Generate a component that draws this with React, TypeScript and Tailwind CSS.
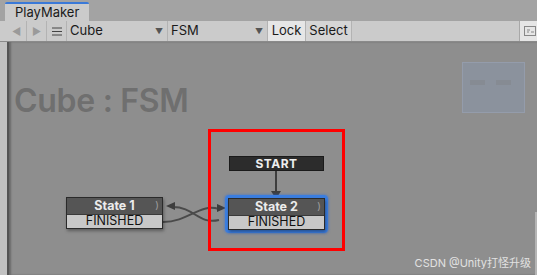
import React from "react";

const font = { fontFamily: "Inter, 'Noto Sans CJK SC', sans-serif" };

function Node({ title, x, y, w, selected }: { title: string; x: number; y: number; w: number; selected?: boolean }) {
  return (
    <div
      className={`absolute ${selected ? "rounded-[4px] border-[3px] border-[#3b7ee0] shadow-[0_0_3px_rgba(40,110,230,0.8)]" : ""}`}
      style={{ left: x, top: y }}
    >
      <div className="border border-[#2a2a2a] shadow-[1px_2px_3px_rgba(0,0,0,0.35)]" style={{ width: w }}>
        <div className="relative h-[16px] bg-[#555555] flex items-center justify-center text-[12.5px] font-bold text-[#ececec] leading-none">
          {title}
          <span className="absolute right-[3px] top-[2px] text-[10px] text-[#a0a0a0] font-normal">)</span>
        </div>
        <div className="h-[14px] bg-[#c8c8c8] border-t border-[#3a3a3a] flex items-center justify-center text-[12.5px] text-[#111] leading-none">
          FINISHED
        </div>
      </div>
    </div>
  );
}

export default function App() {
  return (
    <div className="w-[537px] h-[275px] bg-[#a3a3a3] flex flex-col overflow-hidden" style={font}>
      {/* Tab strip */}
      <div className="h-[21px] flex items-end pl-[5px]">
        <div className="w-[84px] h-[19px] bg-[#cbcbcb] border-t-2 border-[#3a79d8] rounded-t-[2px] text-[13px] text-[#1a1a1a] pl-[10px] leading-[17px]">
          PlayMaker
        </div>
      </div>

      {/* Toolbar */}
      <div className="h-[21px] bg-[#cbcbcb] border-b border-[#8a8a8a] flex items-stretch pl-[7px] text-[13px] text-[#1a1a1a]">
        <div className="w-[20px] flex items-center justify-center border-r border-[#b3b3b3] text-[#9a9a9a] text-[10px]">◀</div>
        <div className="w-[20px] flex items-center justify-center border-r border-[#b3b3b3] text-[#9a9a9a] text-[10px]">▶</div>
        <div className="w-[20px] flex items-center justify-center border-r border-[#b3b3b3] text-[#333]">
          <svg width="10" height="9" viewBox="0 0 10 9"><path d="M0 1h10M0 4.5h10M0 8h10" stroke="#444" strokeWidth="1" /></svg>
        </div>
        <div className="w-[101px] flex items-center justify-between pl-[3px] pr-[4px] border-r border-[#b3b3b3]">
          <span>Cube</span>
          <span className="text-[8px] text-[#555]">▼</span>
        </div>
        <div className="w-[100px] flex items-center justify-between pl-[3px] pr-[4px] border-r border-[#b3b3b3]">
          <span>FSM</span>
          <span className="text-[8px] text-[#555]">▼</span>
        </div>
        <div className="w-[38px] bg-[#e6e6e6] flex items-center justify-center border-r border-[#b3b3b3]">Lock</div>
        <div className="w-[46px] bg-[#d5d5d5] flex items-center justify-center border-r border-[#b3b3b3]">Select</div>
        <div className="flex-1 border-r border-[#a8a8a8]" />
        <div className="w-[17px] bg-[#e6e6e6] flex items-center pl-[4px]">
          <svg width="12" height="10" viewBox="0 0 12 10">
            <rect x="0.5" y="0.5" width="11" height="9" fill="none" stroke="#888" />
            <path d="M3 4h3M3 6h2M7 6h3" stroke="#888" />
          </svg>
        </div>
      </div>

      {/* Body */}
      <div className="flex-1 flex">
        <div className="w-[7px] bg-[#c2c2c2]" />
        <div className="relative flex-1 bg-[#8e8e8e] border-l-2 border-[#555] shadow-[inset_2px_0_2px_rgba(0,0,0,0.25)]">
          <div className="absolute left-[5px] top-[35px] text-[32px] font-semibold text-[#6f6f6f] tracking-[-0.3px]">Cube : FSM</div>

          {/* minimap */}
          <div className="absolute left-[453px] top-[20px] w-[63px] h-[51px] bg-[#8b929d] border border-[#949cab]">
            <div className="absolute left-[7px] top-[17px] w-[15px] h-[5px] bg-[#868b93]" />
            <div className="absolute left-[33px] top-[17px] w-[15px] h-[5px] bg-[#868b93]" />
          </div>

          {/* connections */}
          <svg className="absolute left-0 top-0" width="530" height="233">
            <path d="M267 128 L267 152" stroke="#3d3d3d" strokeWidth="2" fill="none" />
            <path d="M262 149 L272 149 L267 157 Z" fill="#3d3d3d" />
            <path d="M164 165 C185 165, 190 183, 210 178" stroke="#4a4a4a" strokeWidth="2" fill="none" />
            <path d="M154 180 C180 180, 190 161, 210 167" stroke="#4a4a4a" strokeWidth="2" fill="none" />
            <path d="M157 164 L166 160 L166 168 Z" fill="#3d3d3d" />
            <path d="M217 166 L208 162 L208 170 Z" fill="#3d3d3d" />
          </svg>

          {/* START */}
          <div className="absolute left-[220px] top-[114px] w-[95px] h-[15px] bg-[#2c2c2c] border border-[#1a1a1a] flex items-center justify-center text-[12px] font-bold text-[#eeeeee] tracking-[0.5px] leading-none">
            START
          </div>

          <Node title="State 1" x={57} y={155} w={97} />
          <Node title="State 2" x={216} y={153} w={97} selected />

          {/* highlight frame */}
          <div className="absolute left-[199px] top-[87px] w-[137px] h-[122px] border-[3px] border-[#ff0000]" />

          <div className="absolute right-[6px] bottom-[6px] text-[11px] text-[#e2e2e2] leading-none">CSDN @Unity打怪升级</div>
          <div className="absolute right-0 top-[170px] w-[2px] h-[70px] bg-[#b5b5b5]" />
        </div>
      </div>
    </div>
  );
}
